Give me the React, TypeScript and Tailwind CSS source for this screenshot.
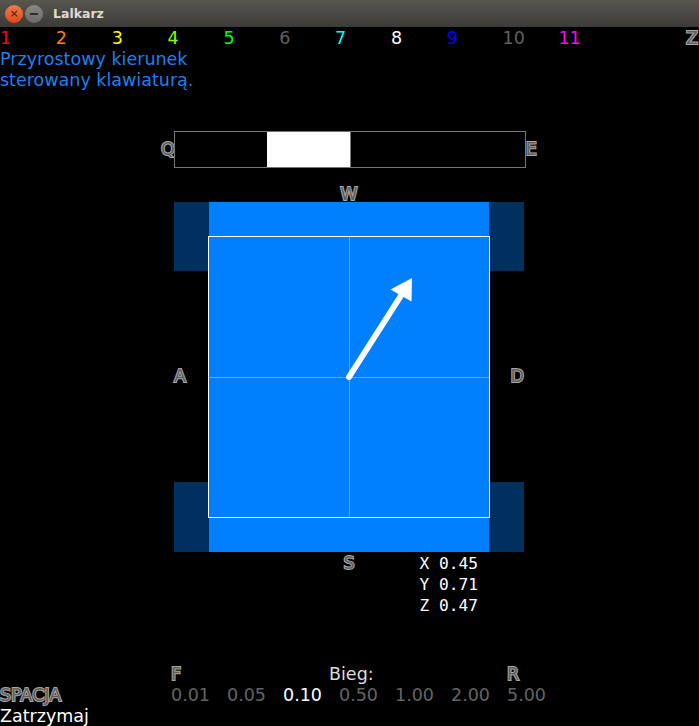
import React from 'react'

const sans = "font-['DejaVu_Sans','Noto_Sans',sans-serif]"
const mono = "font-['DejaVu_Sans_Mono','Liberation_Mono',monospace]"

// grey key label with a light outline ring
function Key({ children, className = '' }: { children: React.ReactNode; className?: string }) {
  return (
    <span
      className={`text-[#5e5e5e] [-webkit-text-stroke:2px_#a8a8a8] [paint-order:stroke_fill] ${className}`}
    >
      {children}
    </span>
  )
}

const slots = [
  { n: '1', c: 'text-[#ff0000]' },
  { n: '2', c: 'text-[#ff7f00]' },
  { n: '3', c: 'text-[#ffff00]' },
  { n: '4', c: 'text-[#7fff00]' },
  { n: '5', c: 'text-[#00ff00]' },
  { n: '6', c: 'text-[#606060]' },
  { n: '7', c: 'text-[#00ffff]' },
  { n: '8', c: 'text-white' },
  { n: '9', c: 'text-[#0000ff]' },
  { n: '10', c: 'text-[#606060]' },
  { n: '11', c: 'text-[#ff00ff]' },
]

const gears = ['0.01', '0.05', '0.10', '0.50', '1.00', '2.00', '5.00']

function TitleBar() {
  return (
    <div className="flex h-[27px] items-center bg-gradient-to-b from-[#57564f] to-[#3c3b37] pl-[5px]">
      <div className="flex h-[18px] w-[18px] items-center justify-center rounded-full bg-gradient-to-b from-[#f47a4e] to-[#dd4814] text-[11px] leading-none text-[#3a1a0c]">
        ×
      </div>
      <div className="ml-[2px] flex h-[18px] w-[18px] items-center justify-center rounded-full bg-gradient-to-b from-[#8a8984] to-[#6b6a66]">
        <div className="h-[2px] w-[8px] bg-[#2e2d2a]" />
      </div>
      <span className={`ml-[10px] text-[12.5px] font-bold text-[#dfdbd2] ${sans}`}>Lalkarz</span>
    </div>
  )
}

function Pad() {
  return (
    <div className="flex w-[350px] self-center">
      <div className="flex w-[35px] flex-col">
        <div className="h-[69px] bg-[#003060]" />
        <div className="flex flex-1 items-center">
          <Key>A</Key>
        </div>
        <div className="h-[70px] bg-[#003060]" />
      </div>
      <div className="h-[350px] w-[280px] bg-[#007fff] pt-[34px]">
        <div className="relative z-10 -ml-px h-[282px] w-[282px] border border-white">
          <svg width="280" height="280" viewBox="0 0 280 280" className="block">
            <line x1="140.5" y1="0" x2="140.5" y2="280" stroke="#5eaaff" strokeWidth="1" />
            <line x1="0" y1="140.5" x2="280" y2="140.5" stroke="#5eaaff" strokeWidth="1" />
            <line x1="140" y1="140" x2="193" y2="57" stroke="white" strokeWidth="6" strokeLinecap="round" />
            <polygon points="203,41 181.5,52.5 202.5,64.5" fill="white" />
          </svg>
        </div>
      </div>
      <div className="flex w-[35px] flex-col">
        <div className="h-[69px] bg-[#003060]" />
        <div className="flex flex-1 items-center justify-end">
          <Key>D</Key>
        </div>
        <div className="h-[70px] bg-[#003060]" />
      </div>
    </div>
  )
}

export default function App() {
  return (
    <div className={`h-[726px] w-[699px] overflow-hidden bg-black text-[17.5px] leading-[21px] ${sans}`}>
      <TitleBar />
      <div className="flex flex-col pr-[1px]">
        <div className="flex pt-[1px]">
          {slots.map((s) => (
            <div key={s.n} className={`w-[56px] ${s.c}`}>
              {s.n}
            </div>
          ))}
          <div className="w-[72px]" />
          <Key>Z</Key>
        </div>
        <div className="leading-[21px] text-[#1e80f0]">
          <div>Przyrostowy kierunek</div>
          <div>sterowany klawiaturą.</div>
        </div>

        <div className="mt-[40px] flex items-center justify-center">
          <Key className="-mr-px">Q</Key>
          <div className="h-[37px] w-[352px] border border-[#777]">
            <div className="ml-[92px] h-full w-[84px] border-r border-[#777] bg-white" />
          </div>
          <Key>E</Key>
        </div>

        <div className="flex h-[34px] items-end justify-center">
          <Key className="-mb-[3px] leading-[21px]">W</Key>
        </div>

        <Pad />

        <div className="mt-[1px] grid w-[350px] grid-cols-[1fr_auto_1fr] self-center">
          <div />
          <Key>S</Key>
          <div className={`pl-[65px] text-[16.2px] text-white ${mono}`}>
            <div>X 0.45</div>
            <div>Y 0.71</div>
            <div>Z 0.47</div>
          </div>
        </div>

        <div className="mt-[48px]">
          <div className="flex pl-[171px]">
            <div className="w-[158px]">
              <Key>F</Key>
            </div>
            <div className="w-[178px] text-[#dcdcdc]">Bieg:</div>
            <Key>R</Key>
          </div>
          <div className="flex">
            <div className="w-[171px]">
              <Key>SPACJA</Key>
            </div>
            {gears.map((g) => (
              <div key={g} className={`w-[56px] ${g === '0.10' ? 'text-white' : 'text-[#646464]'}`}>
                {g}
              </div>
            ))}
          </div>
          <div className="text-white">Zatrzymaj</div>
        </div>
      </div>
    </div>
  )
}
